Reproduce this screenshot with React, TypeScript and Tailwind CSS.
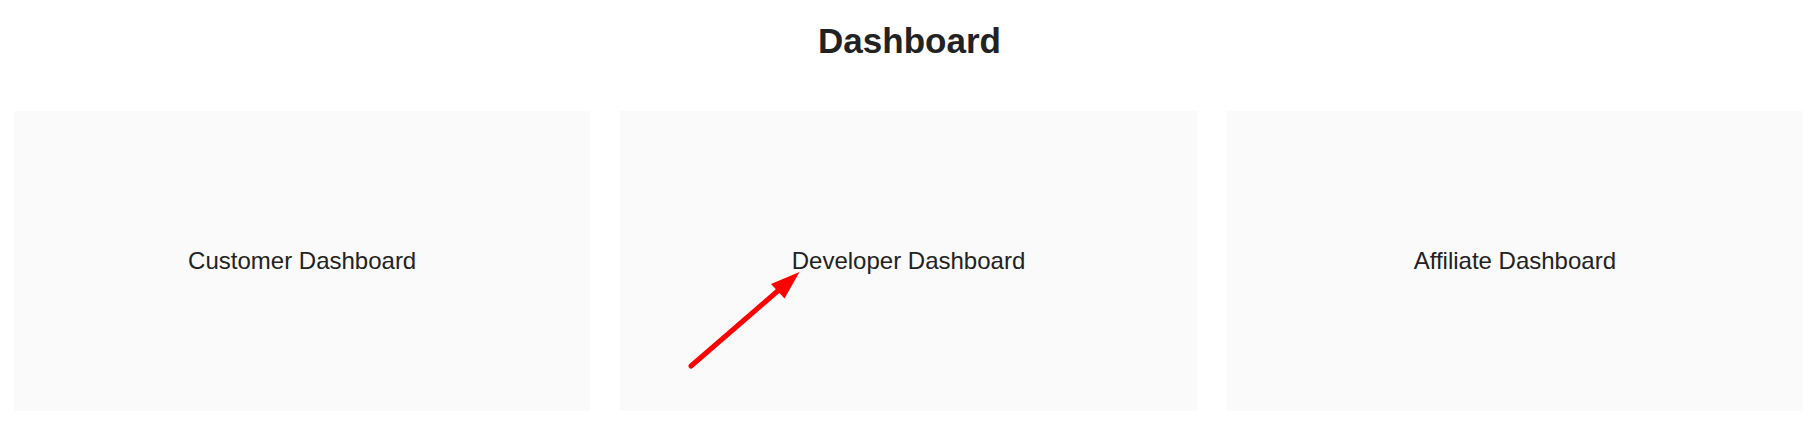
import React from "react";

const dashboards = ["Customer Dashboard", "Developer Dashboard", "Affiliate Dashboard"];

function Arrow() {
  return (
    <svg
      className="pointer-events-none absolute left-0 top-0"
      width="240"
      height="300"
      viewBox="0 0 240 300"
    >
      <line
        x1="71"
        y1="255"
        x2="160"
        y2="178"
        stroke="#ff0000"
        strokeWidth="5"
        strokeLinecap="round"
      />
      <polygon points="179.5,161 151,173 164.5,187.5" fill="#ff0000" />
    </svg>
  );
}

export default function App() {
  return (
    <div className="min-h-screen bg-white font-['Liberation_Sans',Arial,sans-serif] text-[#222]">
      <h1 className="pt-[21px] text-center text-[35px] font-bold leading-[normal]">
        Dashboard
      </h1>
      <div className="mt-[50px] grid grid-cols-3 gap-[30px] pl-[14px] pr-[16px]">
        {dashboards.map((name, i) => (
          <div
            key={name}
            className="relative flex h-[300px] items-center justify-center bg-[#fafafa] text-[24px] leading-[normal]"
          >
            {name}
            {i === 1 && <Arrow />}
          </div>
        ))}
      </div>
    </div>
  );
}
